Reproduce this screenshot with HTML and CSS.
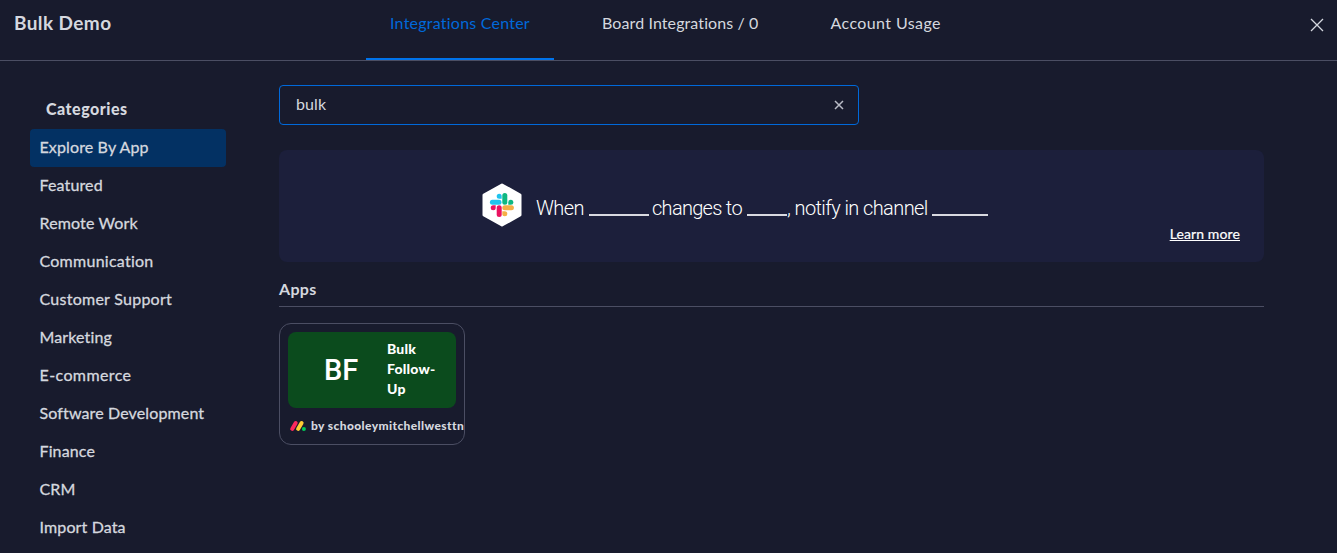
FILE: index.html
```html
<!DOCTYPE html>
<html lang="en">
<head>
<meta charset="utf-8">
<title>Integrations Center</title>
<link rel="stylesheet" href="styles.css">
</head>
<body>
<header class="header">
  <h1 class="title">Bulk Demo</h1>
  <nav class="tabs">
    <a class="tab tab-active"><span class="t-center">Integrations Center</span></a>
    <a class="tab"><span class="t-board">Board Integrations / 0</span></a>
    <a class="tab"><span class="t-usage">Account Usage</span></a>
  </nav>
  <svg class="close" viewBox="0 0 14 14"><path d="M1 1L13 13M13 1L1 13"/></svg>
</header>
<div class="body">
  <aside class="sidebar">
    <h2 class="side-title">Categories</h2>
    <a class="cat cat-active">Explore By App</a>
    <a class="cat">Featured</a>
    <a class="cat">Remote Work</a>
    <a class="cat cat-wide">Communication</a>
    <a class="cat cat-wide">Customer Support</a>
    <a class="cat">Marketing</a>
    <a class="cat cat-wider">E-commerce</a>
    <a class="cat">Software Development</a>
    <a class="cat">Finance</a>
    <a class="cat">CRM</a>
    <a class="cat">Import Data</a>
  </aside>
  <main class="main">
    <div class="search">
      <span class="query">bulk</span>
      <svg class="clear" viewBox="0 0 10 10"><path d="M1 1L9 9M9 1L1 9"/></svg>
    </div>
    <section class="banner">
      <svg class="slack" viewBox="0 0 40 44">
        <path fill="#fff" stroke="#fff" stroke-width="3" stroke-linejoin="round" d="M20 2L38 12V32L20 42L2 32V12Z"/>
        <g stroke-width="5" stroke-linecap="round" fill="none">
          <path stroke="#1fc3ee" d="M10.4 19.2H17"/>
          <path stroke="#0fb882" d="M22.8 12.6V19.2"/>
          <path stroke="#f5ae46" d="M22.8 24.8H29.4"/>
          <path stroke="#ea1360" d="M17.2 24.8V31.4"/>
        </g>
        <path fill="#1fc3ee" d="M19.7 15.7H17.2A2.5 2.5 0 1 1 19.7 13.2Z"/>
        <path fill="#0fb882" d="M26.3 21.7V19.2A2.5 2.5 0 1 1 28.8 21.7Z"/>
        <path fill="#f5ae46" d="M20.3 28.3H22.8A2.5 2.5 0 1 1 20.3 30.8Z"/>
        <path fill="#ea1360" d="M13.7 22.3V24.8A2.5 2.5 0 1 1 11.2 22.3Z"/>
      </svg>
      <p class="recipe"><span class="w-when">When</span><i class="blank blank-a"></i><span class="w-changes">changes to</span><i class="blank blank-b"></i><span class="w-notify">, notify in channel</span><i class="blank blank-c"></i></p>
      <a class="learn">Learn more</a>
    </section>
    <h2 class="section-title">Apps</h2>
    <article class="card">
      <div class="card-head">
        <span class="initials">BF</span>
        <span class="app-name">Bulk<br>Follow-<br>Up</span>
      </div>
      <div class="author">
        <svg class="monday" viewBox="0 0 18 12">
          <g stroke-width="4" stroke-linecap="round"><path stroke="#fb275d" d="M3.2 8.9L6.7 3"/><path stroke="#fc3" d="M9.1 8.9L12.6 3"/></g>
          <circle cx="14.9" cy="8.9" r="2" fill="#00ca58"/>
        </svg>
        <span class="by">by schooleymitchellwesttn</span>
      </div>
    </article>
  </main>
</div>
</body>
</html>
```
FILE: styles.css
```css
* { box-sizing: border-box; }
body {
  margin: 0;
  height: 553px;
  overflow: hidden;
  background: #181b2d;
  color: #d5d8df;
  font: 16px/24px Lato, "Open Sans", sans-serif;
  white-space: nowrap;
}
h1, h2, p { margin: 0; }
.header {
  display: flex;
  height: 61px;
  border-bottom: 1px solid #4b4e63;
}
.title {
  width: 366px;
  padding: 11px 0 0 14px;
  font-size: 19px;
  font-weight: 700;
  letter-spacing: 0.4px;
}
.tabs { display: flex; flex: 1; }
.tab { height: 60px; padding: 11px 24px 0; margin-right: 24px; }
.tab:first-child { width: 188px; }
.tab:nth-child(2) { width: 204.5px; }
.tab-active { color: #0069da; border-bottom: 2px solid #0073ea; }
.t-center { letter-spacing: 0.23px; }
.t-board { letter-spacing: 0.1px; }
.t-usage { letter-spacing: 0.4px; }
.close { width: 14px; height: 14px; margin: 18px 13px 0 0; stroke: #d5d8df; stroke-width: 1.3; fill: none; }
.body { display: flex; }
.sidebar { display: flex; flex-direction: column; width: 279px; padding: 36px 53px 0 30px; }
.side-title { height: 32px; padding-left: 16px; font-size: 16px; line-height: 23px; font-weight: 900; letter-spacing: 0.5px; }
.cat { height: 38px; padding-left: 9.5px; line-height: 35px; border-radius: 4px; letter-spacing: 0.13px; -webkit-text-stroke: 0.3px currentColor; }
.cat-wide { letter-spacing: 0.26px; }
.cat-wider { letter-spacing: 0.4px; }
.cat-active { background: #033163; }
.main { width: 985px; padding-top: 24px; }
.search {
  display: flex;
  justify-content: space-between;
  align-items: center;
  width: 580px;
  height: 40px;
  padding: 0 14.5px 0 16px;
  border: 1px solid #0069da;
  border-radius: 4px;
}
.query { letter-spacing: 0.1px; line-height: 22px; padding-bottom: 2px; }
.clear { width: 10px; height: 10px; stroke: #b9bcc6; stroke-width: 1.5; fill: none; }
.banner {
  display: flex;
  align-items: flex-start;
  height: 112px;
  margin-top: 25px;
  padding: 33px 24px 0 203px;
  border-radius: 8px;
  background: #1c1f3b;
}
.slack { width: 40px; height: 44px; }
.recipe { display: flex; margin: 13px 0 0 14px; color: #fff; font: 300 20px/24px Roboto, sans-serif; }
.w-when { width: 53px; letter-spacing: -0.6px; }
.w-changes { width: 95px; letter-spacing: -0.7px; }
.w-notify { width: 145px; letter-spacing: -0.6px; }
.blank { height: 2px; margin-top: 18px; background: #d9d9e0; }
.blank-a { width: 60px; margin-right: 3px; }
.blank-b { width: 40px; }
.blank-c { width: 56px; }
.learn { margin: 39px 0 0 auto; color: #fff; font-size: 14px; letter-spacing: 0.12px; text-decoration: underline; -webkit-text-stroke: 0.2px currentColor; }
.section-title { height: 45px; padding-top: 15px; border-bottom: 1px solid #4b4e63; font-size: 16px; line-height: 24px; font-weight: 700; letter-spacing: 0.3px; }
.card { width: 186px; height: 122px; margin-top: 16px; padding: 8px; border: 1px solid #4b4e63; border-radius: 12px; }
.card-head { display: flex; align-items: center; height: 76px; border-radius: 8px; background: #0b4b1d; color: #fff; }
.initials { width: 99px; padding-left: 36px; font: 500 29px/40px Roboto, sans-serif; }
.app-name { padding-bottom: 2px; font-size: 14px; line-height: 20px; font-weight: 900; letter-spacing: 0.2px; }
.author { display: flex; align-items: center; height: 36px; }
.monday { flex: none; width: 18px; height: 12px; margin: 0 4px 0 1px; }
.by { font-size: 12px; font-weight: 900; letter-spacing: 0.4px; }
```
